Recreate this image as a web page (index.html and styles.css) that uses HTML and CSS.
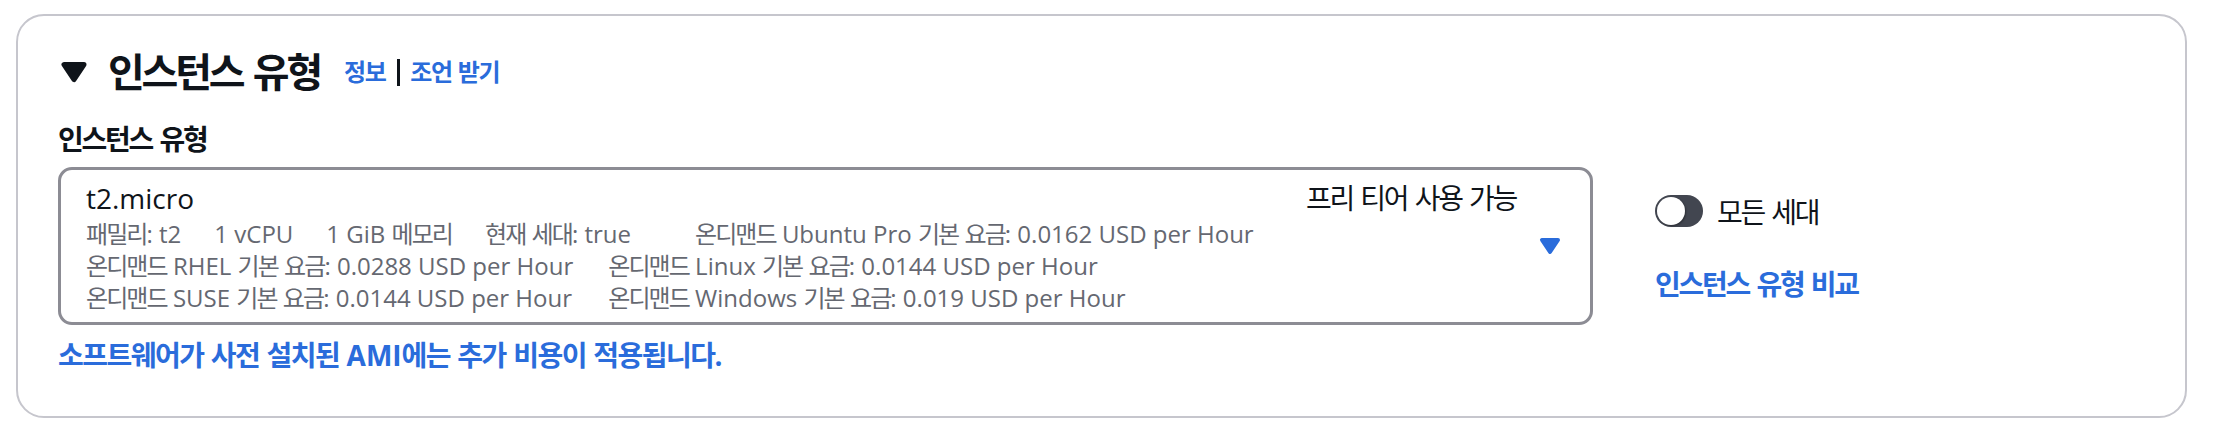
FILE: index.html
```html
<!DOCTYPE html>
<html lang="ko">
<head>
<meta charset="utf-8">
<title>인스턴스 유형</title>
<link rel="stylesheet" href="styles.css">
</head>
<body>
<section class="card">
  <div class="header">
    <svg class="caret-h" viewBox="0 0 16 16" aria-hidden="true"><path d="M4 5h8l-4 6-4-6z" fill="#0f141a" stroke="#0f141a" stroke-width="2" stroke-linejoin="round"/></svg>
    <h2 class="title"><span class="k">인스턴스</span> <span class="k">유형</span></h2>
    <span class="info"><a class="link" href="#"><span class="k">정보</span></a><span class="sep"></span><a class="link" href="#"><span class="k">조언</span> <span class="k">받기</span></a></span>
  </div>
  <div class="label"><span class="k">인스턴스</span> <span class="k">유형</span></div>
  <div class="row">
    <div class="select">
      <div class="opt">
        <div class="opt-top">
          <span class="name">t2.micro</span>
          <span class="tag"><span class="k">프리</span> <span class="k">티어</span> <span class="k">사용</span> <span class="k">가능</span></span>
        </div>
        <div class="tags">
          <div class="r1">
            <span><span class="k">패밀리</span>: t2</span>
            <span>1 vCPU</span>
            <span>1 GiB <span class="k">메모리</span></span>
            <span><span class="k">현재</span> <span class="k">세대</span>: true</span>
            <span class="wide"><span class="k">온디맨드</span> Ubuntu Pro <span class="k">기본</span> <span class="k">요금</span>: 0.0162 USD per Hour</span>
          </div>
          <div class="grid">
            <span><span class="k">온디맨드</span> RHEL <span class="k">기본</span> <span class="k">요금</span>: 0.0288 USD per Hour</span>
            <span><span class="k">온디맨드</span> Linux <span class="k">기본</span> <span class="k">요금</span>: 0.0144 USD per Hour</span>
            <span><span class="k">온디맨드</span> SUSE <span class="k">기본</span> <span class="k">요금</span>: 0.0144 USD per Hour</span>
            <span><span class="k">온디맨드</span> Windows <span class="k">기본</span> <span class="k">요금</span>: 0.019 USD per Hour</span>
          </div>
        </div>
      </div>
      <svg class="dd" viewBox="0 0 16 16" aria-hidden="true"><path d="M4 5h8l-4 6-4-6z" fill="#2a6cdb" stroke="#2a6cdb" stroke-width="2" stroke-linejoin="round"/></svg>
    </div>
    <div class="side">
      <div class="toggle-row">
        <span class="toggle"><span class="knob"></span></span>
        <span><span class="k">모든</span> <span class="k">세대</span></span>
      </div>
      <a class="compare link" href="#"><span class="k">인스턴스</span> <span class="k">유형</span> <span class="k">비교</span></a>
    </div>
  </div>
  <a class="note link" href="#"><span class="k">소프트웨어가</span> <span class="k">사전</span> <span class="k">설치된</span> AMI<span class="k">에는</span> <span class="k">추가</span> <span class="k">비용이</span> <span class="k">적용됩니다</span>.</a>
</section>
</body>
</html>
```

FILE: styles.css
```css
html, body {
  margin: 0;
  background: #ffffff;
}

body {
  font-family: "Open Sans", "Noto Sans CJK KR", sans-serif;
  color: #0f141a;
}

.k {
  letter-spacing: -0.08em;
}

.link {
  color: #2a6cdb;
  text-decoration: none;
}

.card {
  margin: 14px 39px 0 16px;
  border: 2px solid #c6c6cd;
  border-radius: 28px;
  padding: 32px 40px 41px;
}

.header {
  display: flex;
  align-items: center;
  height: 48px;
}

.caret-h {
  width: 40px;
  height: 40px;
  margin-left: -4px;
  margin-right: 14px;
  flex-shrink: 0;
}

.title {
  margin: 0;
  font-size: 40px;
  font-weight: 700;
  line-height: 48px;
}

.info {
  display: flex;
  align-items: center;
  margin-left: 24px;
  font-size: 24px;
  font-weight: 700;
  line-height: 32px;
}

.info .k {
  letter-spacing: -0.06em;
}

.sep {
  display: inline-block;
  width: 3px;
  height: 27px;
  background: #0f141a;
  margin: 0 10px 0 12px;
}

.label {
  margin-top: 23px;
  font-size: 28px;
  font-weight: 700;
  line-height: 40px;
}

.row {
  display: flex;
  align-items: flex-start;
  gap: 62px;
  margin-top: 8px;
}

.select {
  width: 1535px;
  box-sizing: border-box;
  border: 3px solid #8c8c94;
  border-radius: 14px;
  padding: 8px 24px 8px 25px;
  display: flex;
  align-items: center;
}

.opt {
  flex: 1;
}

.opt-top {
  display: flex;
  justify-content: space-between;
  font-size: 28px;
  line-height: 40px;
}

.tags {
  font-size: 24px;
  line-height: 32px;
  color: #656871;
}

.r1 {
  display: flex;
  column-gap: 33px;
}

.r1 .wide {
  margin-left: 31px;
}

.grid {
  display: grid;
  grid-template-columns: max-content max-content;
  column-gap: 35px;
}

.dd {
  width: 32px;
  height: 32px;
  margin-left: 18px;
  flex-shrink: 0;
}

.side {
  padding-top: 24px;
}

.toggle-row {
  display: flex;
  align-items: center;
  gap: 14px;
  height: 40px;
  font-size: 28px;
}

.toggle {
  position: relative;
  width: 48px;
  height: 32px;
  border-radius: 16px;
  background: #424650;
  flex-shrink: 0;
}

.knob {
  position: absolute;
  left: 2px;
  top: 2px;
  width: 28px;
  height: 28px;
  border-radius: 50%;
  background: #ffffff;
  box-shadow: 1px 1px 2px rgba(0, 0, 0, 0.35);
}

.compare {
  display: block;
  margin-top: 33px;
  font-size: 28px;
  font-weight: 700;
  line-height: 40px;
}

.note {
  display: block;
  margin-top: 10px;
  font-size: 28px;
  font-weight: 700;
  line-height: 40px;
}

.note .k {
  letter-spacing: -0.054em;
}
```
